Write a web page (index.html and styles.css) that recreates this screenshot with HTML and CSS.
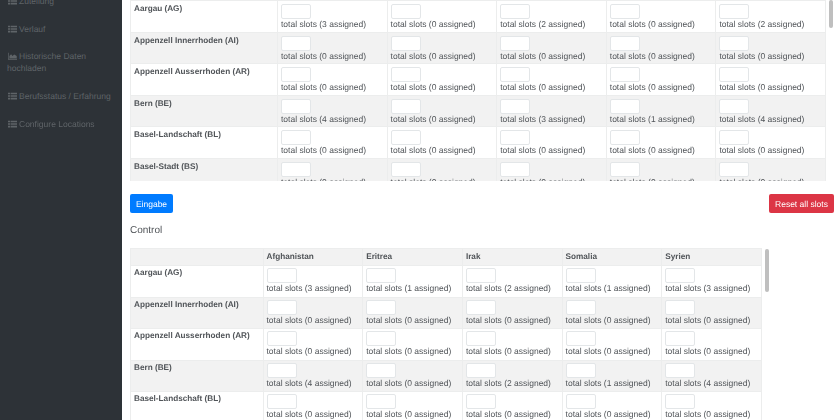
FILE: index.html
```html
<!DOCTYPE html>
<html lang="en">
<head>
  <meta charset="UTF-8" />
  <title>Zuteilung</title>
  <link rel="stylesheet" href="styles.css">
</head>
<body>
  <svg class="defs" width="0" height="0">
    <symbol id="i-table" viewBox="0 0 16 14">
      <path d="M0 1h4v3H0zM5 1h11v3H5zM0 5.5h4v3H0zM5 5.5h11v3H5zM0 10h4v3H0zM5 10h11v3H5z"/>
    </symbol>
    <symbol id="i-chart" viewBox="0 0 16 14">
      <path d="M0 1h1.2v11H16v1.5H0zM2.5 11V7l3-3 2.5 3 3-2.5 4.5 2.5v4z"/>
    </symbol>
  </svg>

  <nav class="sidebar">
    <a class="nav-item"><svg class="icon"><use href="#i-table"/></svg>Zuteilung</a>
    <a class="nav-item"><svg class="icon"><use href="#i-table"/></svg>Verlauf</a>
    <a class="nav-item"><svg class="icon"><use href="#i-chart"/></svg>Historische Daten hochladen</a>
    <a class="nav-item"><svg class="icon"><use href="#i-table"/></svg>Berufsstatus / Erfahrung</a>
    <a class="nav-item"><svg class="icon"><use href="#i-table"/></svg>Configure Locations</a>
  </nav>

  <main class="content">
    <div class="scroller scroller-top">
      <table class="slots slots-top">
        <tbody>
          <tr><th>Aargau (AG)</th>
            <td><input><span>total slots (3 assigned)</span></td>
            <td><input><span>total slots (0 assigned)</span></td>
            <td><input><span>total slots (2 assigned)</span></td>
            <td><input><span>total slots (0 assigned)</span></td>
            <td><input><span>total slots (2 assigned)</span></td></tr>
          <tr><th>Appenzell Innerrhoden (AI)</th>
            <td><input><span>total slots (0 assigned)</span></td>
            <td><input><span>total slots (0 assigned)</span></td>
            <td><input><span>total slots (0 assigned)</span></td>
            <td><input><span>total slots (0 assigned)</span></td>
            <td><input><span>total slots (0 assigned)</span></td></tr>
          <tr><th>Appenzell Ausserrhoden (AR)</th>
            <td><input><span>total slots (0 assigned)</span></td>
            <td><input><span>total slots (0 assigned)</span></td>
            <td><input><span>total slots (0 assigned)</span></td>
            <td><input><span>total slots (0 assigned)</span></td>
            <td><input><span>total slots (0 assigned)</span></td></tr>
          <tr><th>Bern (BE)</th>
            <td><input><span>total slots (4 assigned)</span></td>
            <td><input><span>total slots (0 assigned)</span></td>
            <td><input><span>total slots (3 assigned)</span></td>
            <td><input><span>total slots (1 assigned)</span></td>
            <td><input><span>total slots (4 assigned)</span></td></tr>
          <tr><th>Basel-Landschaft (BL)</th>
            <td><input><span>total slots (0 assigned)</span></td>
            <td><input><span>total slots (0 assigned)</span></td>
            <td><input><span>total slots (0 assigned)</span></td>
            <td><input><span>total slots (0 assigned)</span></td>
            <td><input><span>total slots (0 assigned)</span></td></tr>
          <tr><th>Basel-Stadt (BS)</th>
            <td><input><span>total slots (0 assigned)</span></td>
            <td><input><span>total slots (0 assigned)</span></td>
            <td><input><span>total slots (0 assigned)</span></td>
            <td><input><span>total slots (0 assigned)</span></td>
            <td><input><span>total slots (0 assigned)</span></td></tr>
        </tbody>
      </table>
      <div class="scrollbar scrollbar-top"></div>
    </div>

    <div class="actions">
      <button class="btn btn-primary">Eingabe</button>
      <button class="btn btn-danger">Reset all slots</button>
    </div>

    <h2 class="section-title">Control</h2>

    <div class="scroller scroller-bottom">
      <table class="slots slots-bottom">
        <thead>
          <tr><th></th><th>Afghanistan</th><th>Eritrea</th><th>Irak</th><th>Somalia</th><th>Syrien</th></tr>
        </thead>
        <tbody>
          <tr><th>Aargau (AG)</th>
            <td><input><span>total slots (3 assigned)</span></td>
            <td><input><span>total slots (1 assigned)</span></td>
            <td><input><span>total slots (2 assigned)</span></td>
            <td><input><span>total slots (1 assigned)</span></td>
            <td><input><span>total slots (3 assigned)</span></td></tr>
          <tr><th>Appenzell Innerrhoden (AI)</th>
            <td><input><span>total slots (0 assigned)</span></td>
            <td><input><span>total slots (0 assigned)</span></td>
            <td><input><span>total slots (0 assigned)</span></td>
            <td><input><span>total slots (0 assigned)</span></td>
            <td><input><span>total slots (0 assigned)</span></td></tr>
          <tr><th>Appenzell Ausserrhoden (AR)</th>
            <td><input><span>total slots (0 assigned)</span></td>
            <td><input><span>total slots (0 assigned)</span></td>
            <td><input><span>total slots (0 assigned)</span></td>
            <td><input><span>total slots (0 assigned)</span></td>
            <td><input><span>total slots (0 assigned)</span></td></tr>
          <tr><th>Bern (BE)</th>
            <td><input><span>total slots (4 assigned)</span></td>
            <td><input><span>total slots (0 assigned)</span></td>
            <td><input><span>total slots (2 assigned)</span></td>
            <td><input><span>total slots (1 assigned)</span></td>
            <td><input><span>total slots (4 assigned)</span></td></tr>
          <tr><th>Basel-Landschaft (BL)</th>
            <td><input><span>total slots (0 assigned)</span></td>
            <td><input><span>total slots (0 assigned)</span></td>
            <td><input><span>total slots (0 assigned)</span></td>
            <td><input><span>total slots (0 assigned)</span></td>
            <td><input><span>total slots (0 assigned)</span></td></tr>
        </tbody>
      </table>
      <div class="scrollbar scrollbar-bottom"></div>
    </div>
  </main>
</body>
</html>
```

FILE: styles.css
```css
html, body {
  height: 420px;
  overflow: hidden;
}

body {
  margin: 0;
  display: flex;
  font-family: "Liberation Sans", Arial, sans-serif;
  font-size: 8.5px;
  color: #505458;
  background: #fff;
  text-rendering: geometricPrecision;
  filter: blur(0.6px);
}

.defs {
  display: block;
}

.sidebar {
  width: 122px;
  height: 420px;
  flex: none;
  box-sizing: border-box;
  margin-right: 1px;
  padding: 0 7px;
  background: #2d3237;
  color: #5f6468;
}

.nav-item {
  display: block;
  margin-bottom: 15.7px;
  line-height: 12px;
}

.nav-item:first-child {
  margin-top: -5px;
}

.icon {
  width: 9px;
  height: 8px;
  margin: 0 2px -1px 1px;
  fill: #5f6468;
}

.content {
  flex: 1;
  min-width: 0;
  padding-left: 7px;
}

.scroller {
  position: relative;
  overflow: hidden;
}

.scroller-top {
  width: 703px;
  height: 181px;
}

.scroller-bottom {
  width: 639px;
}

.slots {
  border-collapse: collapse;
  table-layout: fixed;
}

.slots-top {
  width: 696px;
}

.slots-bottom {
  width: 632px;
}

.slots th,
.slots td {
  box-sizing: border-box;
  padding: 3px 3px 0;
  height: 31.6px;
  border: 1px solid #eceded;
  text-align: left;
  vertical-align: top;
  overflow: hidden;
  white-space: nowrap;
}

.slots-bottom tbody th,
.slots-bottom tbody td {
  padding-top: 2px;
}

.slots th {
  font-weight: bold;
  font-size: 8.2px;
  line-height: 10px;
}

.slots thead th {
  height: 17px;
  padding-top: 3px;
  background: #f2f2f2;
}

.slots-top tr > :first-child {
  width: 147px;
}

.slots-bottom tr > :first-child {
  width: 132.5px;
}

.slots tbody tr:nth-child(even) {
  background: #f2f2f2;
}

.slots input {
  display: block;
  box-sizing: border-box;
  width: 30px;
  height: 15px;
  margin: 0;
  padding: 0;
  border: 1px solid #e3e6e8;
  border-radius: 2px;
  background: #fff;
}

.slots span {
  display: block;
  line-height: 11px;
}

.scrollbar {
  position: absolute;
  width: 4px;
  border-radius: 2px;
  background: #bfbfbf;
}

.scrollbar-top {
  right: 0;
  top: 0;
  height: 28px;
}

.scrollbar-bottom {
  right: 0;
  top: 1px;
  height: 43px;
}

.actions {
  display: flex;
  justify-content: space-between;
  width: 704px;
  margin-top: 13px;
}

.btn {
  height: 19px;
  padding: 0;
  border: 1px solid transparent;
  border-radius: 2px;
  font: inherit;
  color: #fff;
  white-space: nowrap;
  text-rendering: geometricPrecision;
}

.btn-primary {
  width: 43px;
  background: #007bff;
}

.btn-danger {
  width: 65px;
  background: #dc3545;
}

.section-title {
  margin: 11px 0 10px;
  font-size: 10px;
  line-height: 14px;
  font-weight: normal;
}
```
